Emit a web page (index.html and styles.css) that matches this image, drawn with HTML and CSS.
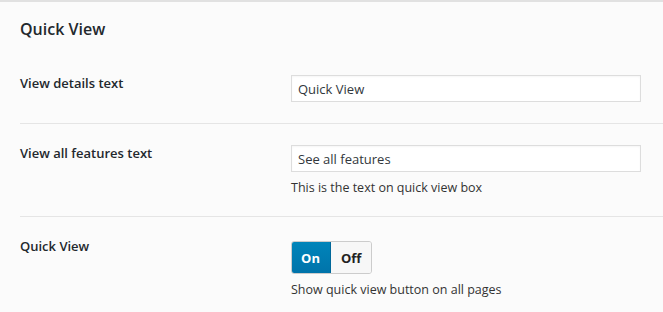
FILE: index.html
```html
<!DOCTYPE html>
<html lang="en">
<head>
    <meta charset="UTF-8">
    <title>Quick View Settings</title>
    <link rel="stylesheet" href="styles.css">
</head>
<body>
    <div class="settings">
        <h2 class="settings-title">Quick View</h2>

        <div class="field-row">
            <div class="field-label">View details text</div>
            <div class="field-control">
                <input class="text-input" type="text" value="Quick View">
            </div>
        </div>

        <div class="field-row">
            <div class="field-label">View all features text</div>
            <div class="field-control">
                <input class="text-input" type="text" value="See all features">
                <p class="description">This is the text on quick view box</p>
            </div>
        </div>

        <div class="field-row toggle-row">
            <div class="field-label">Quick View</div>
            <div class="field-control">
                <div class="switch">
                    <button class="switch-btn active">On</button>
                    <button class="switch-btn">Off</button>
                </div>
                <p class="description">Show quick view button on all pages</p>
            </div>
        </div>
    </div>
</body>
</html>
```

FILE: styles.css
```css
* {
    margin: 0;
    padding: 0;
    box-sizing: border-box;
}

body {
    background: #fbfbfb;
    font-family: 'Open Sans', sans-serif;
    color: #23282d;
    font-size: 13px;
}

.settings {
    border-top: 2px solid #e1e1e1;
    padding-left: 20px;
}

.settings-title {
    font-size: 16px;
    font-weight: 600;
    line-height: 20px;
    padding: 17px 0 15px;
}

.field-row {
    display: grid;
    grid-template-columns: 271px 1fr;
    border-top: 1px solid #e5e5e5;
    padding: 21px 0;
}

.field-row:first-of-type {
    border-top: none;
}

.field-label {
    font-weight: 600;
    font-size: 13px;
    line-height: 17px;
}

.field-control {
    padding-right: 21px;
}

.text-input {
    display: block;
    width: 350px;
    height: 27px;
    border: 1px solid #ddd;
    background: #fff;
    padding: 0 6px;
    font-family: inherit;
    font-size: 13px;
    color: #32373c;
    box-shadow: inset 0 1px 2px rgba(0, 0, 0, 0.04);
}

.description {
    margin: 8px 0 -1px;
    line-height: 16px;
    font-size: 12.5px;
    color: #333;
}

.toggle-row {
    padding-top: 24px;
}

.toggle-row .field-label {
    margin-top: -3px;
}

.switch {
    display: inline-flex;
    height: 33px;
    border: 1px solid #ccc;
    border-radius: 3px;
    overflow: hidden;
}

.switch-btn {
    border: none;
    font-family: inherit;
    font-weight: 700;
    font-size: 13px;
    padding: 0 10px;
    background: #f7f7f7;
    color: #222;
    height: 100%;
}

.switch-btn.active {
    background: linear-gradient(#0085ba, #0073aa);
    color: #fff;
    width: 40px;
    margin: -1px 0 -1px -1px;
    height: 33px;
    border-right: 1px solid #006799;
}

.toggle-row .description {
    margin-top: 8px;
}
```
